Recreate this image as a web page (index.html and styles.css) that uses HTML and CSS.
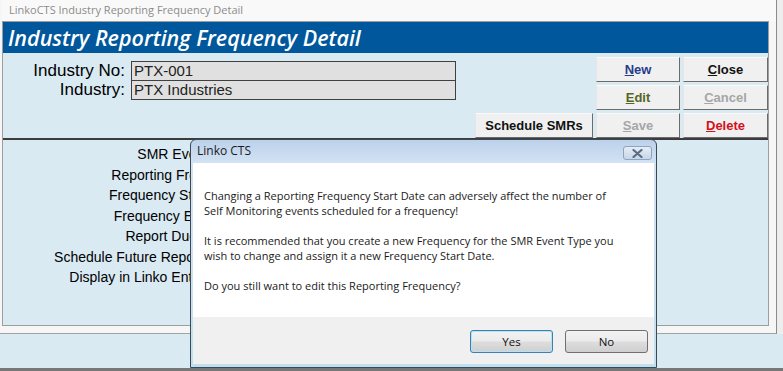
FILE: index.html
```html
<!DOCTYPE html>
<html lang="en">
<head>
    <meta charset="UTF-8">
    <meta name="viewport" content="width=device-width, initial-scale=1.0">
    <title>Industry Reporting Frequency Detail</title>
    <link rel="stylesheet" href="styles.css">
</head>
<body>
    <div class="page">
        <div class="frame">
            <div class="window-title">LinkoCTS Industry Reporting Frequency Detail</div>
            <div class="main">
                <h1 class="form-head">Industry Reporting Frequency Detail</h1>
                <div class="top">
                    <div class="ident">
                        <label>Industry No:</label>
                        <div class="field">PTX-001</div>
                        <label>Industry:</label>
                        <div class="field">PTX Industries</div>
                    </div>
                    <div class="actions">
                        <span></span>
                        <button class="btn btn-new"><u>N</u>ew</button>
                        <button class="btn"><u>C</u>lose</button>
                        <span></span>
                        <button class="btn btn-edit"><u>E</u>dit</button>
                        <button class="btn btn-off"><u>C</u>ancel</button>
                        <button class="btn">Schedule SMRs</button>
                        <button class="btn btn-off"><u>S</u>ave</button>
                        <button class="btn btn-delete"><u>D</u>elete</button>
                    </div>
                </div>
                <div class="detail">
                    <div class="detail-label">SMR Event Type:</div>
                    <div class="detail-label">Reporting Frequency:</div>
                    <div class="detail-label">Frequency Start Date:</div>
                    <div class="detail-label">Frequency End Date:</div>
                    <div class="detail-label">Report Due (Days):</div>
                    <div class="detail-label">Schedule Future Reports Thru:</div>
                    <div class="detail-label">Display in Linko Enterprises:</div>
                </div>
            </div>
        </div>
        <div class="status"></div>

        <!-- message box on top of the form -->
        <div class="dialog">
            <div class="dialog-title">
                <span>Linko CTS</span>
                <button class="dialog-close">
                    <svg width="11" height="9" viewBox="0 0 11 9">
                        <path d="M1.5 1 L9.5 8 M9.5 1 L1.5 8" stroke="#5b6b80" stroke-width="2.2" stroke-linecap="round"/>
                    </svg>
                </button>
            </div>
            <div class="dialog-body">
                <p>Changing a Reporting Frequency Start Date can adversely affect the number of<br>Self Monitoring events scheduled for a frequency!</p>
                <p>It is recommended that you create a new Frequency for the SMR Event Type you<br>wish to change and assign it a new Frequency Start Date.</p>
                <p>Do you still want to edit this Reporting Frequency?</p>
            </div>
            <div class="dialog-foot">
                <button class="dlg-btn dlg-btn-default">Yes</button>
                <button class="dlg-btn">No</button>
            </div>
        </div>
    </div>
</body>
</html>
```

FILE: styles.css
```css
:root {
    --header: #00579b;
    --form-bg: #d9eaf3;
    --frame: #f6f6f6;
    --border: #9d9d9d;
    --ui-font: "Open Sans", "Noto Sans", sans-serif;
}

* {
    box-sizing: border-box;
}

body {
    margin: 0;
    font-family: "Liberation Sans", Arial, sans-serif;
    background: #ededed;
}

.page {
    position: relative;
    width: 783px;
    height: 371px;
    background: #ededed;
}

.frame {
    width: 777px;
    height: 334px;
    padding-left: 2px;
    background: var(--frame);
    border-right: 1px solid #8a8a8a;
    border-bottom: 1px solid #a3a3a3;
}

.window-title {
    height: 21px;
    padding-left: 7px;
    font-family: var(--ui-font);
    font-size: 11px;
    line-height: 20px;
    color: #8c8c8c;
    background: #f9f9f9;
}

.main {
    width: 767px;
    border: 1px solid var(--border);
}

.form-head {
    margin: 0;
    height: 31px;
    padding-left: 5px;
    font-family: var(--ui-font);
    font-size: 21.5px;
    font-style: italic;
    font-weight: 600;
    line-height: 31px;
    color: #fff;
    background: var(--header);
}

.top {
    display: flex;
    justify-content: space-between;
    height: 85px;
    padding: 4px 0 0;
    background: var(--form-bg);
}

.ident {
    display: grid;
    grid-template-columns: 122px 325px;
    grid-auto-rows: 19px;
    column-gap: 6px;
    padding-top: 4px;
}

.ident label {
    font-size: 17px;
    line-height: 20px;
    text-align: right;
    color: #000;
}

.field {
    height: 20px;
    padding-left: 2px;
    font-size: 15px;
    line-height: 18px;
    color: #222;
    background: #e0e0e0;
    border: 1px solid #404040;
}

.actions {
    display: grid;
    grid-template-columns: 118px 84px 85px;
    grid-auto-rows: 25px;
    gap: 3px;
}

.btn {
    padding: 0;
    font-family: "Liberation Sans", Arial, sans-serif;
    font-size: 13px;
    font-weight: bold;
    color: #111;
    background: #f0f0f0;
    border: 1px solid;
    border-color: #fafafa #6b6b6b #6b6b6b #e6e6e6;
}

.btn-new { color: #283c8c; }
.btn-edit { color: #556621; }
.btn-off { color: #a6a6a6; }
.btn-delete { color: #d3101c; }

.detail {
    height: 187px;
    padding-top: 4px;
    background: var(--form-bg);
    border-top: 2px solid #3c3c3c;
}

.detail-label {
    width: 243px;
    font-size: 14px;
    line-height: 20.5px;
    text-align: right;
    color: #000;
}

.status {
    height: 37px;
    background: var(--form-bg);
    border-bottom: 3px solid #777;
}

/* message box */
.dialog {
    position: absolute;
    left: 190px;
    top: 139px;
    width: 467px;
    height: 229px;
    display: flex;
    flex-direction: column;
    padding: 0 2px 3px;
    font-family: var(--ui-font);
    font-size: 11px;
    color: #1a1a1a;
    background: linear-gradient(#bcd1ea, #d4e3f4 24px, #cde0f1 60%, #bfe0f0);
    border: 1px solid #3b4856;
    border-radius: 6px 6px 0 0;
}

.dialog-title {
    display: flex;
    justify-content: space-between;
    height: 23px;
    padding-left: 4px;
    font-size: 12px;
    line-height: 22px;
}

.dialog-close {
    width: 29px;
    height: 14px;
    margin: 6px 2px 0 0;
    padding: 0;
    display: flex;
    align-items: center;
    justify-content: center;
    background: linear-gradient(#e6edf6, #c8d6e8);
    border: 1px solid #8ea5c0;
    border-radius: 3px;
}

.dialog-body {
    height: 154px;
    padding: 25px 11px 0;
    line-height: 15px;
    background: #fff;
}

.dialog-body p {
    margin: 0 0 15px;
}

.dialog-foot {
    display: flex;
    justify-content: flex-end;
    gap: 12px;
    height: 47px;
    padding: 13px 6px 0 0;
    background: #f0f0f0;
}

.dlg-btn {
    width: 83px;
    height: 23px;
    padding: 0;
    font-family: var(--ui-font);
    font-size: 11.5px;
    color: #111;
    background: linear-gradient(#f2f2f2, #ebebeb 48%, #dddddd 52%, #cfcfcf);
    border: 1px solid #707070;
    border-radius: 3px;
}

.dlg-btn-default {
    border-color: #3c7fb1;
    box-shadow: inset 0 0 0 1px #b6e2f6;
}
```
